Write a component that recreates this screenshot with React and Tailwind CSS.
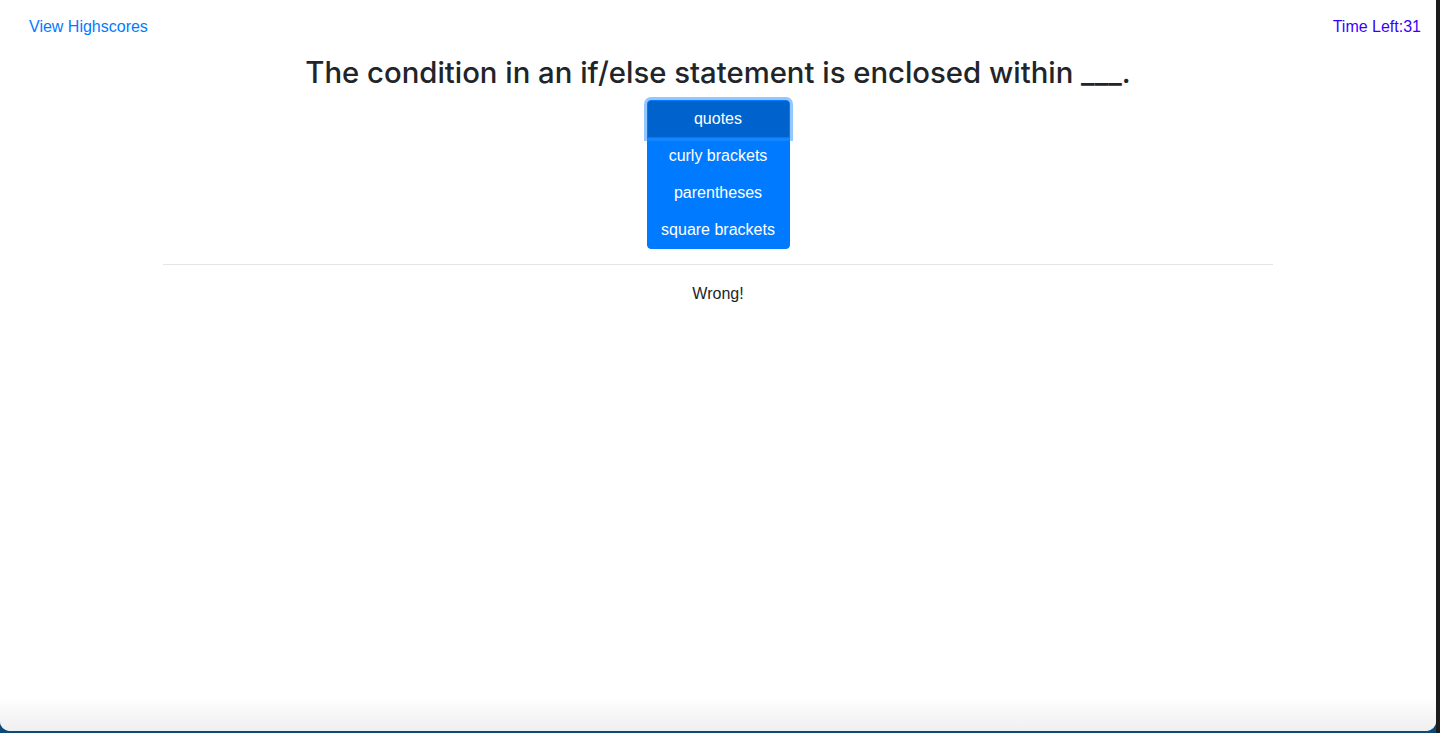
const choices = ['quotes', 'curly brackets', 'parentheses', 'square brackets'];

function ChoiceButton({ label, index, active }) {
  const first = index === 0;
  const last = index === choices.length - 1;
  return (
    <button
      className={
        'relative block w-full whitespace-nowrap px-3 py-1.5 text-base leading-6 text-white border border-[#007bff] ' +
        (active
          ? 'z-10 bg-[#0062cc] border-[#005cbf] shadow-[0_0_0_3px_rgba(38,143,255,0.5)] '
          : 'bg-[#007bff] ') +
        (first ? 'rounded-t ' : '-mt-px ') +
        (last ? 'rounded-b' : '')
      }
    >
      {label}
    </button>
  );
}

export default function App() {
  return (
    <div
      className="flex h-[733px] w-[1440px] overflow-hidden bg-[#0d4a78] text-[#212529]"
      style={{ fontFamily: '"Liberation Sans", Arial, sans-serif' }}
    >
      <div className="flex flex-1 flex-col">
        <div className="flex flex-1 flex-col rounded-b-[10px] bg-white">
          <div className="flex items-start justify-between pl-[29px] pr-[15px] pt-[15px] text-base leading-6">
            <a className="text-[#007bff]">View Highscores</a>
            <span className="text-[#3a00ff]">Time Left:31</span>
          </div>

          <div className="mx-auto w-[1140px] px-[15px]">
            <h2 className="mt-[15px] text-center font-['Inter',sans-serif] text-[29.3px] font-medium leading-[38px]">
              The condition in an if/else statement is enclosed within ___.
            </h2>
            <div className="mt-[8px] flex justify-center">
              <div className="flex w-[143px] flex-col">
                {choices.map((c, i) => (
                  <ChoiceButton key={c} label={c} index={i} active={i === 0} />
                ))}
              </div>
            </div>
            <hr className="mt-[15px] border-t border-black/10" />
            <p className="mt-[17px] text-center text-base leading-6">Wrong!</p>
          </div>

          <div className="flex-1" />
          <div className="h-[34px] rounded-b-[10px] bg-gradient-to-b from-white to-[#efefef]" />
        </div>
        <div className="h-[2px]" />
      </div>
      <div className="w-[4px] bg-[#1c1c1e]" />
    </div>
  );
}
